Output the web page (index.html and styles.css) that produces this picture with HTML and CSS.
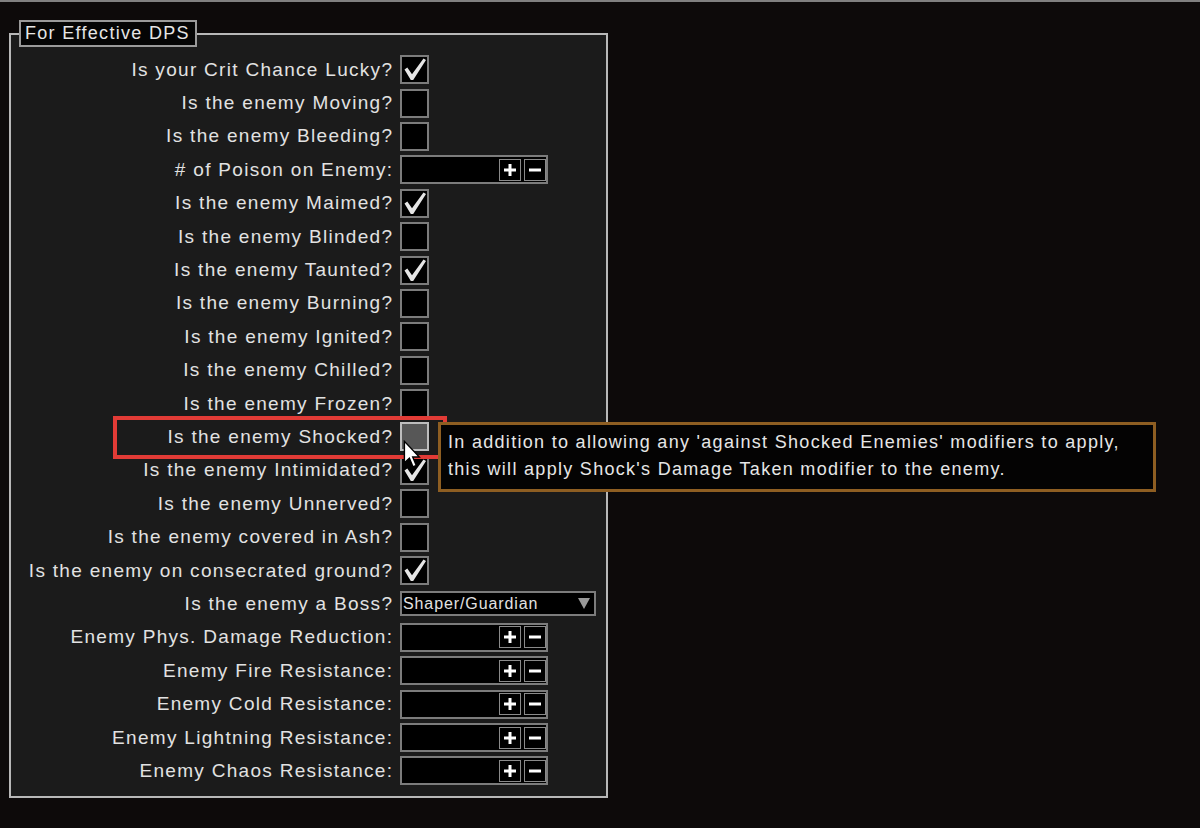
FILE: index.html
```html
<!DOCTYPE html>
<html>
<head>
<meta charset="utf-8">
<link rel="stylesheet" href="styles.css">
</head>
<body>
<div class="topline"></div>
<fieldset class="panel">
  <legend class="legend">For Effective DPS</legend>
  <div class="rows">
    <div class="label">Is your Crit Chance Lucky?</div>
    <div class="ctl"><span class="cb"><svg class="chk" viewBox="0 0 25 25"><path d="M2.5 12.5 L5.3 10.6 L10 17.2 L21.5 1.5 L24 3 L11.2 23 L8.8 23 Z"/></svg></span></div>

    <div class="label">Is the enemy Moving?</div>
    <div class="ctl"><span class="cb"></span></div>

    <div class="label">Is the enemy Bleeding?</div>
    <div class="ctl"><span class="cb"></span></div>

    <div class="label"># of Poison on Enemy:</div>
    <div class="ctl"><span class="num"><span class="btn"><svg viewBox="0 0 20 20"><path d="M8.5 4h3v4.5h4.5v3h-4.5v4.5h-3v-4.5h-4.5v-3h4.5z"/></svg></span><span class="btn"><svg viewBox="0 0 20 20"><path d="M4 8.5h12v3h-12z"/></svg></span></span></div>

    <div class="label">Is the enemy Maimed?</div>
    <div class="ctl"><span class="cb"><svg class="chk" viewBox="0 0 25 25"><path d="M2.5 12.5 L5.3 10.6 L10 17.2 L21.5 1.5 L24 3 L11.2 23 L8.8 23 Z"/></svg></span></div>

    <div class="label">Is the enemy Blinded?</div>
    <div class="ctl"><span class="cb"></span></div>

    <div class="label">Is the enemy Taunted?</div>
    <div class="ctl"><span class="cb"><svg class="chk" viewBox="0 0 25 25"><path d="M2.5 12.5 L5.3 10.6 L10 17.2 L21.5 1.5 L24 3 L11.2 23 L8.8 23 Z"/></svg></span></div>

    <div class="label">Is the enemy Burning?</div>
    <div class="ctl"><span class="cb"></span></div>

    <div class="label">Is the enemy Ignited?</div>
    <div class="ctl"><span class="cb"></span></div>

    <div class="label">Is the enemy Chilled?</div>
    <div class="ctl"><span class="cb"></span></div>

    <div class="label">Is the enemy Frozen?</div>
    <div class="ctl"><span class="cb"></span></div>

    <div class="label">Is the enemy Shocked?</div>
    <div class="ctl"><span class="cb hover"></span></div>

    <div class="label">Is the enemy Intimidated?</div>
    <div class="ctl"><span class="cb"><svg class="chk" viewBox="0 0 25 25"><path d="M2.5 12.5 L5.3 10.6 L10 17.2 L21.5 1.5 L24 3 L11.2 23 L8.8 23 Z"/></svg></span></div>

    <div class="label">Is the enemy Unnerved?</div>
    <div class="ctl"><span class="cb"></span></div>

    <div class="label">Is the enemy covered in Ash?</div>
    <div class="ctl"><span class="cb"></span></div>

    <div class="label">Is the enemy on consecrated ground?</div>
    <div class="ctl"><span class="cb"><svg class="chk" viewBox="0 0 25 25"><path d="M2.5 12.5 L5.3 10.6 L10 17.2 L21.5 1.5 L24 3 L11.2 23 L8.8 23 Z"/></svg></span></div>

    <div class="label">Is the enemy a Boss?</div>
    <div class="ctl"><span class="dd"><span class="dd-text">Shaper/Guardian</span><svg class="arrow" viewBox="0 0 12 11"><path d="M0 0h12l-6 11z"/></svg></span></div>

    <div class="label">Enemy Phys. Damage Reduction:</div>
    <div class="ctl"><span class="num"><span class="btn"><svg viewBox="0 0 20 20"><path d="M8.5 4h3v4.5h4.5v3h-4.5v4.5h-3v-4.5h-4.5v-3h4.5z"/></svg></span><span class="btn"><svg viewBox="0 0 20 20"><path d="M4 8.5h12v3h-12z"/></svg></span></span></div>

    <div class="label">Enemy Fire Resistance:</div>
    <div class="ctl"><span class="num"><span class="btn"><svg viewBox="0 0 20 20"><path d="M8.5 4h3v4.5h4.5v3h-4.5v4.5h-3v-4.5h-4.5v-3h4.5z"/></svg></span><span class="btn"><svg viewBox="0 0 20 20"><path d="M4 8.5h12v3h-12z"/></svg></span></span></div>

    <div class="label">Enemy Cold Resistance:</div>
    <div class="ctl"><span class="num"><span class="btn"><svg viewBox="0 0 20 20"><path d="M8.5 4h3v4.5h4.5v3h-4.5v4.5h-3v-4.5h-4.5v-3h4.5z"/></svg></span><span class="btn"><svg viewBox="0 0 20 20"><path d="M4 8.5h12v3h-12z"/></svg></span></span></div>

    <div class="label">Enemy Lightning Resistance:</div>
    <div class="ctl"><span class="num"><span class="btn"><svg viewBox="0 0 20 20"><path d="M8.5 4h3v4.5h4.5v3h-4.5v4.5h-3v-4.5h-4.5v-3h4.5z"/></svg></span><span class="btn"><svg viewBox="0 0 20 20"><path d="M4 8.5h12v3h-12z"/></svg></span></span></div>

    <div class="label">Enemy Chaos Resistance:</div>
    <div class="ctl"><span class="num"><span class="btn"><svg viewBox="0 0 20 20"><path d="M8.5 4h3v4.5h4.5v3h-4.5v4.5h-3v-4.5h-4.5v-3h4.5z"/></svg></span><span class="btn"><svg viewBox="0 0 20 20"><path d="M4 8.5h12v3h-12z"/></svg></span></span></div>
  </div>
</fieldset>

<div class="highlight"></div>

<div class="tooltip">
  <div class="tip-line">In addition to allowing any 'against Shocked Enemies' modifiers to apply,</div>
  <div class="tip-line">this will apply Shock's Damage Taken modifier to the enemy.</div>
</div>

<svg class="cursor" viewBox="0 0 13 21"><path d="M1 1 L1 16.5 L4.6 13.2 L7.2 19.4 L9.6 18.4 L7 12.3 L11.8 12.3 Z"/></svg>
</body>
</html>
```

FILE: styles.css
```css
html, body {
  margin: 0;
  padding: 0;
}

body {
  width: 1200px;
  height: 828px;
  overflow: hidden;
  background: #0d0a0a;
  font-family: "Liberation Sans", Arial, sans-serif;
  color: #e2e2e2;
  position: relative;
}

.topline {
  height: 2px;
  background: #808080;
}

.panel {
  box-sizing: border-box;
  width: 599px;
  height: 778px;
  margin: 18px 0 0 9px;
  padding: 6px 8px 0 8px;
  border: 2px solid #b8b8b8;
  background: #1b1b1b;
  min-width: 0;
}

.legend {
  box-sizing: border-box;
  height: 27px;
  padding: 0 5px 0 4px;
  border: 2px solid #9a9a9a;
  background: #050505;
  font-size: 18px;
  line-height: 23px;
  letter-spacing: 1.3px;
  color: #e6e6e6;
}

.rows {
  display: grid;
  grid-template-columns: 373px 1fr;
  grid-auto-rows: 33.4px;
  column-gap: 8px;
  align-items: center;
}

.label {
  text-align: right;
  font-size: 19px;
  letter-spacing: 1.3px;
  margin-right: -1.3px;
  white-space: nowrap;
  color: #e2e2e2;
}

.ctl {
  display: flex;
  align-items: center;
}

.cb {
  box-sizing: border-box;
  width: 29px;
  height: 29px;
  border: 2px solid #7c7c7c;
  background: #000;
  display: block;
}

.cb.hover {
  background: #575757;
  border-color: #bdbdbd;
}

.chk {
  display: block;
  width: 25px;
  height: 25px;
  fill: #e6e6e6;
}

.num {
  box-sizing: border-box;
  width: 148px;
  height: 29px;
  border: 2px solid #7c7c7c;
  background: #000;
  display: flex;
  justify-content: flex-end;
  align-items: center;
  gap: 3px;
}

.btn {
  box-sizing: border-box;
  width: 22px;
  height: 22px;
  border: 1px solid #8a8a8a;
  background: #000;
  display: block;
}

.btn svg {
  display: block;
  width: 20px;
  height: 20px;
  fill: #fff;
}

.dd {
  box-sizing: border-box;
  width: 196px;
  height: 25px;
  border: 2px solid #7c7c7c;
  background: #000;
  display: flex;
  align-items: center;
  justify-content: space-between;
  padding: 0 4px 0 1px;
}

.dd-text {
  font-size: 16px;
  letter-spacing: 0.9px;
  color: #e2e2e2;
  white-space: nowrap;
}

.arrow {
  width: 12px;
  height: 11px;
  fill: #9a9a9a;
}

.highlight {
  position: absolute;
  left: 113px;
  top: 416px;
  width: 334px;
  height: 43px;
  box-sizing: border-box;
  border: 4px solid #e23b36;
}

.tooltip {
  position: absolute;
  left: 438px;
  top: 422px;
  width: 718px;
  height: 70px;
  box-sizing: border-box;
  border: 3px solid #8e5e22;
  background: #040303;
  padding: 4px 0 0 7px;
}

.tip-line {
  font-size: 18px;
  line-height: 27px;
  letter-spacing: 1.3px;
  color: #e6e6e6;
  white-space: nowrap;
}

.cursor {
  position: absolute;
  left: 403px;
  top: 440px;
  width: 18px;
  height: 29px;
  fill: #fff;
  stroke: #000;
  stroke-width: 1;
}
```
